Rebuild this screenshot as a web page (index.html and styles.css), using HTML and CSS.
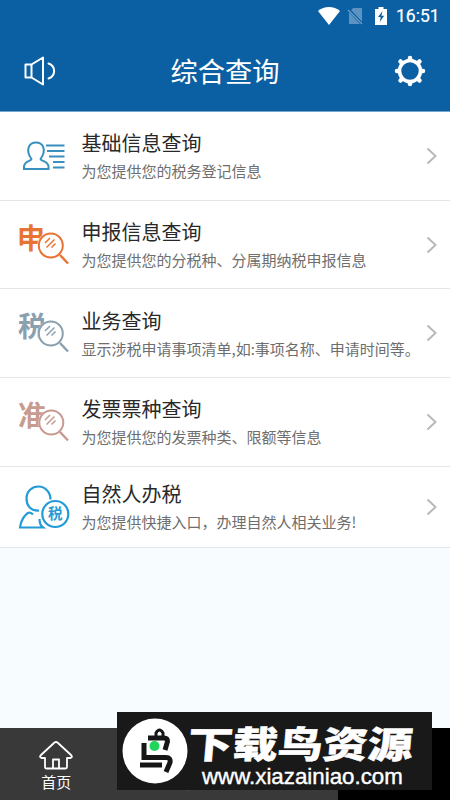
FILE: index.html
```html
<!DOCTYPE html>
<html lang="zh-CN">
<head>
<meta charset="utf-8">
<title>综合查询</title>
<link rel="stylesheet" href="styles.css">
</head>
<body>
<div class="screen">
  <header class="header">
    <div class="status">
      <svg class="wifi" width="22" height="18" viewBox="0 0 22 18"><path d="M0 4C6-1.2 16-1.2 22 4L11 18Z" fill="#fff"/></svg>
      <svg class="sim" width="17" height="18" viewBox="0 0 17 18"><path d="M6 1h9v16H2V6Z" fill="#5d93c2"/><path d="M0 1 16 18" stroke="#0b5fa3" stroke-width="3"/><path d="M1 3 15 17" stroke="#6e9fc9" stroke-width="1.3"/></svg>
      <svg class="battery" width="12" height="18" viewBox="0 0 12 18"><path d="M3.5 0h5v2H12v16H0V2h3.5Z" fill="#fff"/><path d="M7.5 4 3 10h2.7L4.7 15 9.2 8.7H6.4Z" fill="#0b5fa3"/></svg>
      <span class="time">16:51</span>
    </div>
    <div class="titlebar">
      <svg class="speaker" width="32" height="30" viewBox="0 0 32 30" fill="none" stroke="#fff" stroke-width="2" stroke-linejoin="round" stroke-linecap="round"><path d="M1.500 8.500h6v13h-6ZM7.500 8.500 19 1.500v27L7.500 21.500M24.500 7.500c7.500 2.500 7.500 12.500 0 15"/></svg>
      <h1 class="title">综合查询</h1>
      <svg class="gear" width="32" height="32" viewBox="-16 -16 32 32" fill="none" stroke="#fff"><circle r="10.500" stroke-width="3.600"/><g stroke-width="4.500" stroke-linecap="round"><path d="M0-11.500v-1.500M0 11.500v1.500M-11.500 0h-1.500M11.500 0h1.500M-8.500-8.500l-1-1M8.500-8.500l1-1M-8.500 8.500l-1 1M8.500 8.500l1 1"/></g></svg>
    </div>
  </header>
  <main class="list">
    <section class="row">
      <svg class="icon" width="52" height="48" viewBox="0 0 52 48" fill="none" stroke="#398fbe" stroke-width="2"><path d="M13.500 27C7 18 11 10.500 18 10.500S29 18 22.500 27c0 2 8 2 8 7.500V37H6v-2.500c0-5.500 7.500-5.500 7.500-7.500Z"/><path d="M28 13.500h18.500M29 19h17.500M31 24.500h15.500M35 30h11.500M35 35.500h11.500" stroke-width="1.800"/></svg>
      <div class="copy"><h2>基础信息查询</h2><p>为您提供您的税务登记信息</p></div>
      <svg class="arrow" width="12" height="18" viewBox="0 0 12 18"><path d="m1.500 1.500 8 7.500-8 7.500"/></svg>
    </section>
    <section class="row">
      <svg class="icon orange" width="52" height="48" viewBox="0 0 52 48"><text x="-1" y="28" class="glyph">申</text><circle cx="32.800" cy="24.500" r="13.500" fill="#fff"/><circle cx="32.800" cy="24.500" r="12" class="lens"/><path d="m27 22 5-5M28.500 26.500l8-8M33.500 26.500l4-4" class="shine"/><path d="m42 34 8 8.500" class="handle"/></svg>
      <div class="copy"><h2>申报信息查询</h2><p>为您提供您的分税种、分属期纳税申报信息</p></div>
      <svg class="arrow" width="12" height="18" viewBox="0 0 12 18"><path d="m1.500 1.500 8 7.500-8 7.500"/></svg>
    </section>
    <section class="row">
      <svg class="icon slate" width="52" height="48" viewBox="0 0 52 48"><text x="0" y="28" class="glyph">税</text><circle cx="32.800" cy="24.500" r="13" fill="#fff"/><circle cx="32.800" cy="24.500" r="12" class="lens"/><path d="m27 22 5-5M28.500 26.500l8-8M33.500 26.500l4-4" class="shine"/><path d="m42 34 8 8.500" class="handle"/></svg>
      <div class="copy"><h2>业务查询</h2><p>显示涉税申请事项清单,如:事项名称、申请时间等。</p></div>
      <svg class="arrow" width="12" height="18" viewBox="0 0 12 18"><path d="m1.500 1.500 8 7.500-8 7.500"/></svg>
    </section>
    <section class="row">
      <svg class="icon rose" width="52" height="48" viewBox="0 0 52 48"><text x="0" y="28" class="glyph">准</text><circle cx="33.300" cy="24.500" r="13" fill="#fff"/><circle cx="33.300" cy="24.500" r="12" class="lens"/><path d="m27 22 5-5M28.500 26.500l8-8M33.500 26.500l4-4" class="shine"/><path d="m42 34 8 8.500" class="handle"/></svg>
      <div class="copy"><h2>发票票种查询</h2><p>为您提供您的发票种类、限额等信息</p></div>
      <svg class="arrow" width="12" height="18" viewBox="0 0 12 18"><path d="m1.500 1.500 8 7.500-8 7.500"/></svg>
    </section>
    <section class="row last">
      <svg class="icon" width="52" height="48" viewBox="0 0 52 48" fill="none" stroke="#229bd7" stroke-width="2.200"><path d="M21 27.500C12 28 8.500 22 8.500 15.500 8.500 8 14 3.500 20.500 3.500S32.500 9 32.500 16.500M11 29.500C7 31 2.500 38 2 44.500h23Q21.500 42 21.500 36M11 29.500q2 0 4 2"/><circle cx="37.300" cy="31" r="13" stroke-width="2.200"/><text x="30" y="36.300" class="stamp">税</text></svg>
      <div class="copy"><h2>自然人办税</h2><p>为您提供快捷入口，办理自然人相关业务!</p></div>
      <svg class="arrow" width="12" height="18" viewBox="0 0 12 18"><path d="m1.500 1.500 8 7.500-8 7.500"/></svg>
    </section>
  </main>
  <nav class="tabs">
    <div class="tab">
      <svg width="34" height="30" viewBox="0 0 34 30" fill="none" stroke="#fff" stroke-width="1.800" stroke-linejoin="round"><path d="M6 18H2.500Q0 17 2 15L15.500 2.500q1.500-1 3 0L32 15q2 2-.500 3H28v9q0 1.500-1.500 1.500h-19Q6 28.500 6 27Z"/><path d="M14 28v-8.500h6V28"/></svg>
      <span>首页</span>
    </div>
    <div class="tab covered"><span>我要办税</span></div>
    <div class="tab covered"><span>综合查询信息</span></div>
    <div class="tab selected"></div>
  </nav>
  <aside class="banner">
    <svg class="logo" width="66" height="66" viewBox="0 0 66 66"><circle cx="33" cy="33" r="32.500" fill="#fff"/><g fill="none" stroke="#161616" stroke-width="5"><path d="M34 20v-5q3.500-6 7 0v5" stroke-width="3"/><path d="M26 20h16q3.500 0 3.500 3.500L43 32M22 25v14.500h22q5 0 4 5l-4 9.500M18 47h22"/></g><circle cx="32.500" cy="28" r="5" fill="#20d45c"/></svg>
    <div class="banner-copy"><strong>下载鸟资源</strong><span>www.xiazainiao.com</span></div>
  </aside>
</div>
</body>
</html>
```

FILE: styles.css
```css
* { box-sizing: border-box; }
body, h1, h2, p { margin: 0; }
body { font-family: "Noto Sans CJK SC", sans-serif; }
.screen { position: relative; width: 450px; height: 800px; overflow: hidden; display: flex; flex-direction: column; background: #f6fcff; }
.header { height: 112px; background: #0b5fa3; border-bottom: 1px solid #78a7ce; color: #fff; }
.status { height: 31px; display: flex; align-items: center; justify-content: flex-end; padding-right: 11px; }
.sim { margin-left: 7px; }
.battery { margin-left: 11px; }
.time { margin-left: 9px; font: 400 17.500px/30px Roboto, sans-serif; -webkit-text-stroke: .2px #fff; width: 43px; white-space: nowrap; }
.titlebar { height: 80px; display: flex; align-items: center; justify-content: space-between; padding: 0 24px; }
.title { font-size: 27.300px; line-height: 38px; padding-bottom: 2px; font-weight: 400; }
.list { background: #fff; }
.row { height: 88.700px; display: flex; align-items: center; padding: 0 12px 0 18px; border-bottom: 1px solid #e3e5e6; }
.row.last { height: 81px; }
.icon { flex: none; overflow: visible; }
.copy { flex: 1; padding: 1px 0 0 11.500px; white-space: nowrap; }
.copy h2 { font-size: 20px; line-height: 29px; font-weight: 400; color: #292929; }
.copy p { font-size: 15px; line-height: 27px; color: #6e6e6e; }
.arrow { flex: none; fill: none; stroke: #b9b9b9; stroke-width: 2; }
.orange { color: #e97332; }
.slate { color: #8ba0af; }
.rose { color: #c89b90; }
.glyph { font-size: 28px; font-weight: 700; fill: currentColor; }
.lens, .shine, .handle { fill: none; stroke: currentColor; stroke-width: 2; }
.shine { stroke-width: 1.500; }
.handle { stroke-width: 2.500; }
.stamp { font-size: 14.500px; font-weight: 700; fill: #229bd7; stroke: none; }
.tabs { margin-top: auto; height: 72px; display: grid; grid-template-columns: repeat(3, 112.500px) 1fr; background: #393939; color: #fff; }
.tab { display: flex; flex-direction: column; align-items: center; justify-content: flex-end; padding-bottom: 8px; font-size: 15px; line-height: 20px; }
.tab svg { margin-bottom: 2px; }
.covered { padding-bottom: 8px; color: #aaa; }
.selected { background: #000; }
.banner { position: absolute; left: 117px; top: 712px; width: 315px; height: 78px; display: flex; align-items: center; padding-left: 5px; background: #191919; color: #fff; }
.banner-copy { display: flex; flex-direction: column; padding-top: 4px; }
.banner strong { font-size: 45px; line-height: 48px; font-weight: 900; transform: skewX(-5deg) scaleY(.82); -webkit-text-stroke: .6px #fff; }
.banner span { padding-left: 14px; font: 22.300px/22px "Liberation Sans", sans-serif; -webkit-text-stroke: .4px #fff; }
```
